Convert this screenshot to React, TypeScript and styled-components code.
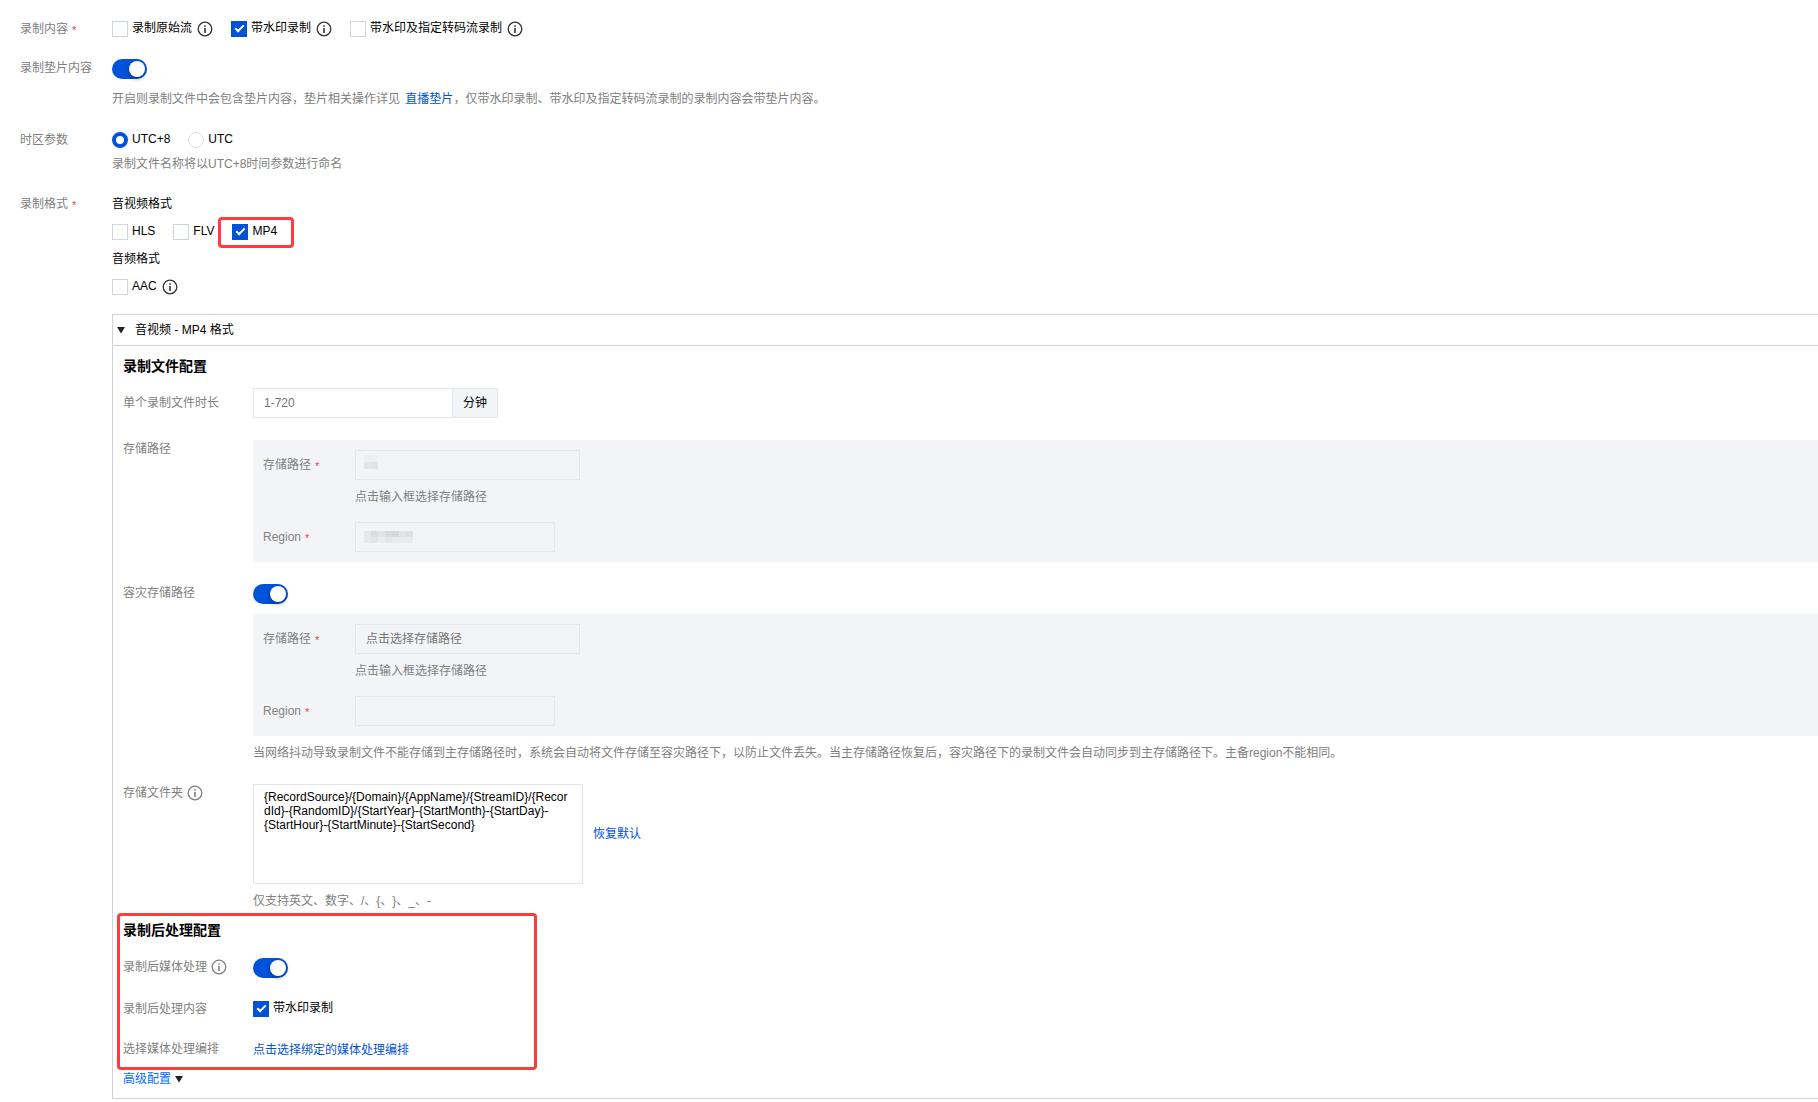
import React from "react";
import styled, { createGlobalStyle, css } from "styled-components";

const blue = "#0052d9";
const grey = "#808080";
const tint = "#f3f4f8";

const GlobalStyle = createGlobalStyle`
  *, *::before, *::after { box-sizing: border-box; }
  body {
    margin: 0;
    background: #fff;
    color: #000;
    font: 12px/20px "Liberation Sans", "Noto Sans CJK SC", sans-serif;
    text-spacing-trim: space-all;
  }
  input, textarea, button { font: inherit; color: inherit; }
`;

const Form = styled.form`
  padding: 19px 0 0 20px;
`;

const Row = styled.div<{ $label?: number; $gap?: number; $field?: boolean }>`
  display: grid;
  grid-template-columns: ${(p) => p.$label ?? 130}px minmax(0, 1fr);
  margin-bottom: ${(p) => p.$gap ?? 0}px;
  ${(p) =>
    p.$field
      ? css`
          align-items: center;
        `
      : css`
          align-items: start;
        `}
`;

const Caption = styled.div`
  display: flex;
  align-items: center;
  gap: 4px;
  color: ${grey};
  line-height: 20px;
  white-space: nowrap;
`;

const Star = styled.span`
  padding-top: 2px;
  color: #e54545;
  font-size: 11px;
  line-height: 18px;
`;

const Content = styled.div`
  padding-top: 1px;
  min-width: 0;
`;

const Hint = styled.p<{ $top?: number }>`
  margin: ${(p) => p.$top ?? 7}px 0 0;
  color: ${grey};
  line-height: 20px;
`;

const Link = styled.a<{ $inline?: boolean }>`
  color: ${blue};
  text-decoration: none;
  margin-left: ${(p) => (p.$inline ? 2 : 0)}px;
`;

const Choices = styled.div<{ $top?: number }>`
  display: flex;
  gap: 18px;
  margin-top: ${(p) => p.$top ?? 0}px;
`;

const Choice = styled.div`
  position: relative;
  display: flex;
  align-items: flex-start;
  gap: 5px;
  height: 18px;
`;

const ChoiceLabel = styled.label`
  display: flex;
  align-items: flex-start;
  gap: 4px;
  line-height: 16px;
  white-space: nowrap;
`;

const Tick = styled.input`
  appearance: none;
  flex: none;
  display: grid;
  place-items: center;
  width: 16px;
  height: 16px;
  margin: 1px 0 0;
  border: 1px solid #cfd5de;
  background: #fff;
  &:checked {
    border-color: ${blue};
    background: ${blue};
  }
  &:checked::after {
    content: "";
    width: 9px;
    height: 5px;
    margin-top: -3px;
    border: solid #fff;
    border-width: 0 0 2px 2px;
    transform: rotate(-45deg);
  }
`;

const Radio = styled.input`
  appearance: none;
  flex: none;
  width: 16px;
  height: 16px;
  margin: 1px 0 0;
  border: 1px solid #dcdfe8;
  border-radius: 50%;
  background: #fff;
  &:checked {
    border: 4px solid ${blue};
  }
`;

const Switch = styled.input`
  appearance: none;
  display: block;
  width: 35px;
  height: 20px;
  margin: 0;
  padding: 2px;
  border-radius: 10px;
  background: #cfd5de;
  &::after {
    content: "";
    display: block;
    width: 16px;
    height: 16px;
    border-radius: 50%;
    background: #fff;
    box-shadow: 0 2px 4px rgba(0, 0, 0, 0.35);
  }
  &:checked {
    background: ${blue};
  }
  &:checked::after {
    margin-left: 15px;
  }
`;

const IconFrame = styled.svg<{ $top?: number }>`
  flex: none;
  display: block;
  width: 16px;
  height: 16px;
  margin-top: ${(p) => p.$top ?? 0}px;
`;

const SubHeading = styled.div<{ $top?: number }>`
  margin-top: ${(p) => p.$top ?? 0}px;
  line-height: 18px;
`;

const Marker = styled.div<{ $inset: string; $width?: number }>`
  position: absolute;
  inset: ${(p) => p.$inset};
  width: ${(p) => (p.$width ? `${p.$width}px` : "auto")};
  border: 3px solid #ff3b3b;
  border-radius: 4px;
  pointer-events: none;
`;

const Panel = styled.section`
  margin-top: 18px;
  border: 1px solid #cfd2dd;
  border-right: 0;
`;

const PanelHeader = styled.button`
  display: flex;
  align-items: center;
  gap: 10px;
  width: 100%;
  height: 31px;
  padding: 0 4px;
  border: 0;
  border-bottom: 1px solid #cfd2dd;
  background: none;
  text-align: left;
`;

const PanelBody = styled.div`
  padding: 10px 0 9px 10px;
`;

const Title = styled.h3<{ $gap: number }>`
  margin: 0 0 ${(p) => p.$gap}px;
  font-size: 14px;
  line-height: 20px;
  font-weight: 700;
`;

const Group = styled.div`
  display: flex;
`;

const TextInput = styled.input<{ $width: number; $plain?: boolean }>`
  display: block;
  width: ${(p) => p.$width}px;
  height: 30px;
  padding: 0 10px;
  border: 1px solid #e5e7ee;
  border-radius: 0;
  background: ${(p) => (p.$plain ? "#fff" : "transparent")};
  outline: 0;
  &::placeholder {
    color: #757575;
    opacity: 1;
  }
`;

const Addon = styled.span`
  height: 30px;
  padding: 0 10px;
  border: 1px solid #e5e7ee;
  border-left: 0;
  background: ${tint};
  line-height: 28px;
`;

const Tinted = styled.div<{ $top?: number }>`
  margin-top: ${(p) => p.$top ?? 0}px;
  padding: 10px;
  background: ${tint};
`;

const Indented = styled.div`
  margin: 0 0 15px 92px;
`;

const Masked = styled.div`
  display: grid;
  align-items: center;
  > * {
    grid-area: 1 / 1;
  }
`;

const Mosaic = styled.div<{ $columns: number; $raised?: boolean }>`
  display: grid;
  grid-template-columns: repeat(${(p) => p.$columns}, 7px);
  grid-auto-rows: ${(p) => (p.$raised ? 7 : 6)}px;
  margin: 0 0 ${(p) => (p.$raised ? 6 : 0)}px 9px;
  pointer-events: none;
`;

const Cell = styled.span<{ $tone: string }>`
  background: ${(p) => p.$tone};
`;

const FolderLine = styled.div`
  display: flex;
  align-items: center;
  gap: 10px;
`;

const TextArea = styled.textarea`
  display: block;
  width: 330px;
  height: 100px;
  padding: 5px 10px;
  border: 1px solid #e0e3ec;
  border-radius: 0;
  line-height: 14px;
  resize: none;
  outline: 0;
`;

const TextButton = styled.button`
  display: block;
  padding: 0;
  border: 0;
  background: none;
  color: ${blue};
  line-height: 20px;
`;

const PostSection = styled.section`
  position: relative;
  margin: 9px 0;
`;

const Advanced = styled.button`
  display: flex;
  align-items: center;
  gap: 4px;
  padding: 0;
  border: 0;
  background: none;
  color: #006eff;
  line-height: 20px;
`;

function InfoIcon({ color = "#333", top }: { color?: string; top?: number }) {
  return (
    <IconFrame $top={top} viewBox="0 0 16 16" fill="none" aria-hidden="true">
      <circle cx="8" cy="8" r="6.8" stroke={color} strokeWidth="1.3" />
      <path d="M7.2 4.2h1.6v1.6H7.2zM7.2 7h1.6v5H7.2z" fill={color} />
    </IconFrame>
  );
}

function Caret() {
  return (
    <svg width="8" height="7" viewBox="0 0 8 7" aria-hidden="true">
      <path d="M0 0h8L4 6.5z" fill="#222" />
    </svg>
  );
}

function Required() {
  return <Star>*</Star>;
}

type OptionProps = { id: string; text: string; checked?: boolean; info?: boolean; children?: React.ReactNode };

function CheckOption({ id, text, checked, info, children }: OptionProps) {
  return (
    <Choice>
      <ChoiceLabel htmlFor={id}>
        <Tick type="checkbox" id={id} defaultChecked={checked} />
        {text}
      </ChoiceLabel>
      {info && <InfoIcon top={1} />}
      {children}
    </Choice>
  );
}

function MaskedInput({ id, width, tones, columns, raised }: { id: string; width: number; tones: string[]; columns: number; raised?: boolean }) {
  return (
    <Masked>
      <TextInput id={id} $width={width} readOnly />
      <Mosaic $columns={columns} $raised={raised}>
        {tones.map((tone, i) => (
          <Cell key={i} $tone={tone} />
        ))}
      </Mosaic>
    </Masked>
  );
}

function StorageFields({ prefix, path, region, top }: { prefix: string; path: React.ReactNode; region: React.ReactNode; top?: number }) {
  return (
    <Tinted $top={top}>
      <Row $label={92} $field>
        <Caption as="label" htmlFor={`${prefix}-path`}>
          存储路径
          <Required />
        </Caption>
        {path}
      </Row>
      <Indented>
        <Hint>点击输入框选择存储路径</Hint>
      </Indented>
      <Row $label={92} $field>
        <Caption as="label" htmlFor={`${prefix}-region`}>
          Region
          <Required />
        </Caption>
        {region}
      </Row>
    </Tinted>
  );
}

const pathTones = ["#edeef1", "#eeeff2", "#e4e5e8", "#e2e3e6"];
const regionTones = [
  "#e6e7ea", "#dcdde1", "#e3e4e7", "#d9dbe0", "#d6d8dc", "#e3e4e8", "#dedfe3",
  "#e8e9ec", "#e2e3e7", "#eaebee", "#e5e6ea", "#e9eaed", "#e9eaee", "#eaebee",
];

const folderTemplate =
  "{RecordSource}/{Domain}/{AppName}/{StreamID}/{RecordId}-{RandomID}/{StartYear}-{StartMonth}-{StartDay}-{StartHour}-{StartMinute}-{StartSecond}";

export default function App() {
  return (
    <>
      <GlobalStyle />
      <Form onSubmit={(e) => e.preventDefault()}>
        <Row $label={92} $gap={19}>
          <Caption>
            录制内容
            <Required />
          </Caption>
          <Content>
            <Choices>
              <CheckOption id="origin" text="录制原始流" info />
              <CheckOption id="watermark" text="带水印录制" checked info />
              <CheckOption id="transcode" text="带水印及指定转码流录制" info />
            </Choices>
          </Content>
        </Row>

        <Row $label={92} $gap={21}>
          <Caption as="label" htmlFor="slate">录制垫片内容</Caption>
          <Content>
            <Switch type="checkbox" role="switch" id="slate" defaultChecked />
            <Hint $top={10}>
              开启则录制文件中会包含垫片内容，垫片相关操作详见{" "}
              <Link href="#slate" $inline>直播垫片</Link>
              ，仅带水印录制、带水印及指定转码流录制的录制内容会带垫片内容。
            </Hint>
          </Content>
        </Row>

        <Row $label={92} $gap={20}>
          <Caption>时区参数</Caption>
          <Content>
            <Choices>
              <Choice>
                <ChoiceLabel htmlFor="utc8">
                  <Radio type="radio" name="zone" id="utc8" defaultChecked />
                  UTC+8
                </ChoiceLabel>
              </Choice>
              <Choice>
                <ChoiceLabel htmlFor="utc">
                  <Radio type="radio" name="zone" id="utc" />
                  UTC
                </ChoiceLabel>
              </Choice>
            </Choices>
            <Hint $top={5}>录制文件名称将以UTC+8时间参数进行命名</Hint>
          </Content>
        </Row>

        <Row $label={92}>
          <Caption>
            录制格式
            <Required />
          </Caption>
          <Content>
            <SubHeading>音视频格式</SubHeading>
            <Choices $top={10}>
              <CheckOption id="hls" text="HLS" />
              <CheckOption id="flv" text="FLV" />
              <CheckOption id="mp4" text="MP4" checked>
                <Marker $inset="-6px -17px -7px -14px" />
              </CheckOption>
            </Choices>
            <SubHeading $top={9}>音频格式</SubHeading>
            <Choices $top={10}>
              <CheckOption id="aac" text="AAC" info />
            </Choices>

            <Panel>
              <PanelHeader type="button" aria-expanded="true">
                <Caret />
                音视频 - MP4 格式
              </PanelHeader>
              <PanelBody>
                <Title $gap={12}>录制文件配置</Title>

                <Row $field $gap={21}>
                  <Caption as="label" htmlFor="duration">单个录制文件时长</Caption>
                  <Group>
                    <TextInput id="duration" $width={200} $plain placeholder="1-720" />
                    <Addon>分钟</Addon>
                  </Group>
                </Row>

                <Row $gap={21}>
                  <Caption>存储路径</Caption>
                  <Content>
                    <StorageFields
                      prefix="main"
                      path={<MaskedInput id="main-path" width={225} columns={2} tones={pathTones} raised />}
                      region={<MaskedInput id="main-region" width={200} columns={7} tones={regionTones} />}
                    />
                  </Content>
                </Row>

                <Row $gap={20}>
                  <Caption as="label" htmlFor="backup">容灾存储路径</Caption>
                  <Content>
                    <Switch type="checkbox" role="switch" id="backup" defaultChecked />
                    <StorageFields
                      prefix="backup"
                      top={10}
                      path={<TextInput id="backup-path" $width={225} placeholder="点击选择存储路径" readOnly />}
                      region={<TextInput id="backup-region" $width={200} readOnly />}
                    />
                    <Hint>
                      当网络抖动导致录制文件不能存储到主存储路径时，系统会自动将文件存储至容灾路径下，以防止文件丢失。当主存储路径恢复后，容灾路径下的录制文件会自动同步到主存储路径下。主备region不能相同。
                    </Hint>
                  </Content>
                </Row>

                <Row>
                  <Caption as="label" htmlFor="folder">
                    存储文件夹
                    <InfoIcon color={grey} />
                  </Caption>
                  <Content>
                    <FolderLine>
                      <TextArea id="folder" defaultValue={folderTemplate} spellCheck={false} />
                      <TextButton type="button">恢复默认</TextButton>
                    </FolderLine>
                    <Hint>{"仅支持英文、数字、/、{、}、_、-"}</Hint>
                  </Content>
                </Row>

                <PostSection>
                  <Marker $inset="-7px auto -10px -6px" $width={420} />
                  <Title $gap={17}>录制后处理配置</Title>
                  <Row $gap={21}>
                    <Caption as="label" htmlFor="post">
                      录制后媒体处理
                      <InfoIcon color={grey} />
                    </Caption>
                    <Content>
                      <Switch type="checkbox" role="switch" id="post" defaultChecked />
                    </Content>
                  </Row>
                  <Row $gap={20}>
                    <Caption>录制后处理内容</Caption>
                    <Content>
                      <CheckOption id="post-watermark" text="带水印录制" checked />
                    </Content>
                  </Row>
                  <Row>
                    <Caption>选择媒体处理编排</Caption>
                    <Content>
                      <TextButton type="button">点击选择绑定的媒体处理编排</TextButton>
                    </Content>
                  </Row>
                </PostSection>

                <Advanced type="button">
                  高级配置
                  <Caret />
                </Advanced>
              </PanelBody>
            </Panel>
          </Content>
        </Row>
      </Form>
    </>
  );
}
